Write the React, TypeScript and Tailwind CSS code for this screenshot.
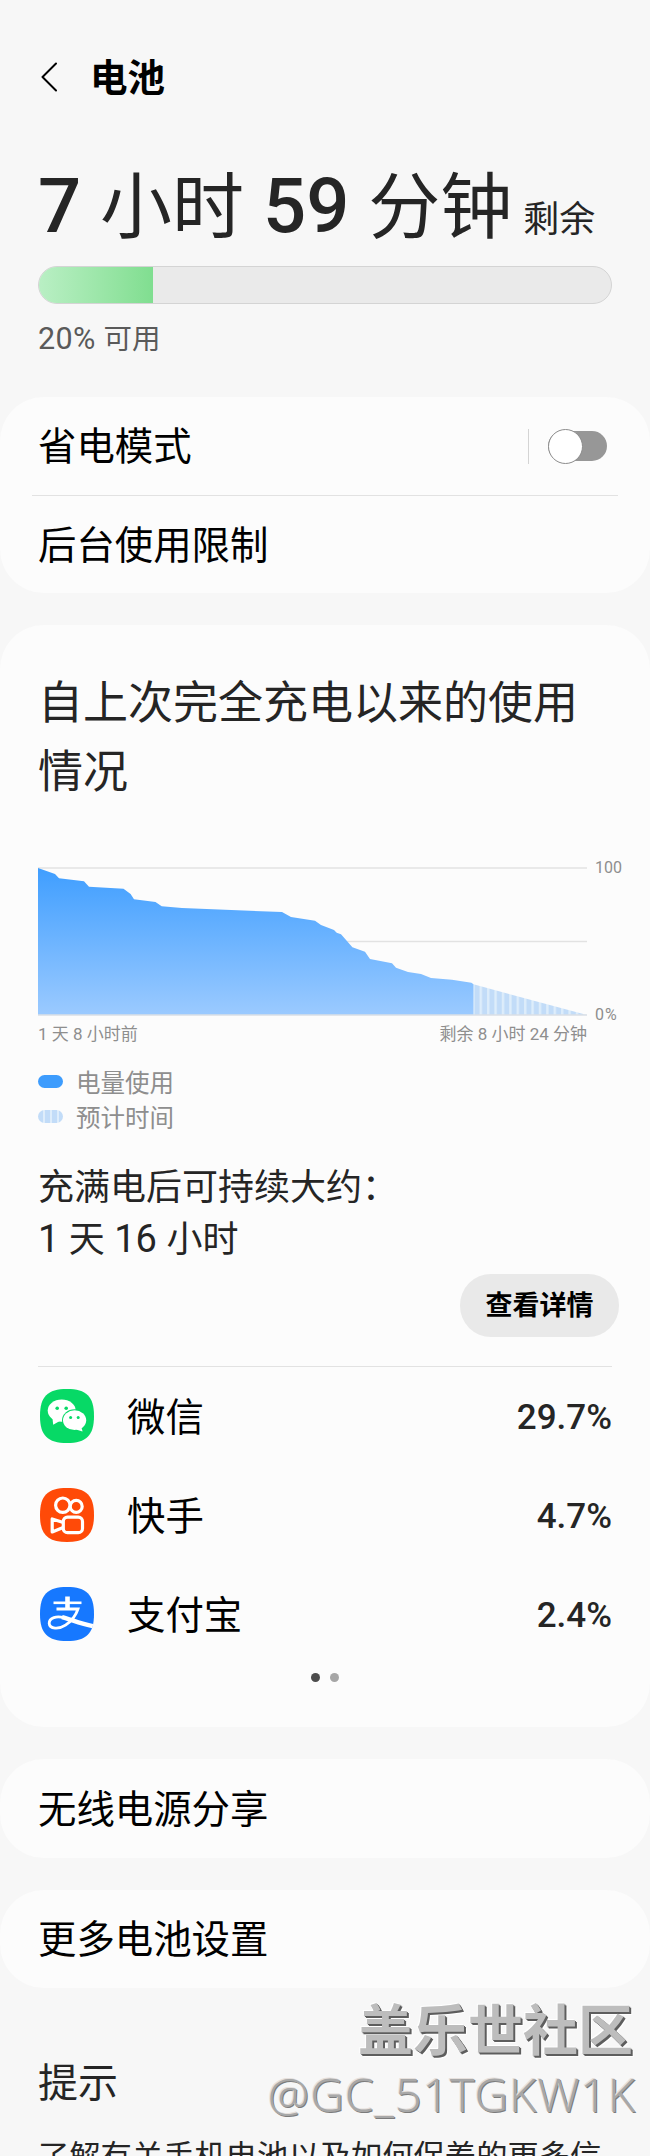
import { ReactNode } from "react";

const apps = [
  { name: "微信", usage: "29.7%", icon: <WechatIcon /> },
  { name: "快手", usage: "4.7%", icon: <KuaishouIcon /> },
  { name: "支付宝", usage: "2.4%", icon: <AlipayIcon /> },
];

const usagePoints =
  "0,0 17,6 21,10.3 46,13.3 51,18.7 85.5,20.7 92.6,26 96,31.3 117.5,34 123.7,38.3 144,40 244,44 253,49 277,52.7 283,57 296,62 298.7,64.7 303,66.3 314.4,79.3 327,83.7 332,91 354,95.3 358,99.7 370,104 383,106 393,110 414,111.7 433.4,114.7 435.5,116.3 435.5,147 0,147";

function AppIcon({ color, children }: { color: string; children: ReactNode }) {
  return (
    <svg viewBox="0 0 54 54" className="mb-0.5 h-[54px] w-[54px]" fill="none">
      <path
        d="M27 0C46.5 0 54 7.5 54 27S46.5 54 27 54 0 46.5 0 27 7.5 0 27 0Z"
        fill={color}
      />
      {children}
    </svg>
  );
}

function WechatIcon() {
  return (
    <AppIcon color="#07d966">
      <path d="M12.2 27l1 8.8 7-4z" fill="#fff" />
      <ellipse cx="21.7" cy="21.6" rx="14" ry="11.2" fill="#fff" />
      <ellipse cx="34.6" cy="31.2" rx="12.6" ry="11" fill="#07d966" />
      <ellipse cx="34.6" cy="31.2" rx="11.6" ry="9.9" fill="#fff" />
      <path d="M36 40.5l6.6 2-1.6-5.5z" fill="#fff" />
      <circle cx="17.2" cy="19.2" r="1.8" fill="#07d966" />
      <circle cx="26.2" cy="19.2" r="1.8" fill="#07d966" />
      <circle cx="30.6" cy="28.4" r="1.5" fill="#07d966" />
      <circle cx="38.2" cy="28.4" r="1.5" fill="#07d966" />
    </AppIcon>
  );
}

function KuaishouIcon() {
  return (
    <AppIcon color="#ff4a08">
      <g stroke="#fff" strokeWidth="3.2" strokeLinejoin="round">
        <circle cx="22.8" cy="17.2" r="7.2" />
        <circle cx="36.2" cy="18.4" r="6" />
        <rect x="23.3" y="29.2" width="19.2" height="15.4" rx="4.2" />
        <path d="M22.5 34.3L12.2 31v13l10.3-4.3" />
      </g>
    </AppIcon>
  );
}

function AlipayIcon() {
  return (
    <AppIcon color="#1678ff">
      <g stroke="#fff">
        <path d="M13.5 15.8H41.5" strokeWidth="2.6" />
        <path d="M27.5 9.5V22" strokeWidth="4.6" />
        <path
          d="M16.5 22H38C36 28 31 34.5 25.5 38.2C19 42.5 9.5 42.2 9.2 36.4C9 30.5 17 28.6 24 30.8"
          strokeWidth="2.8"
        />
        <path d="M22 30.2C31 32.6 40 36.5 52.8 39.2" strokeWidth="4.4" />
      </g>
    </AppIcon>
  );
}

function BatteryChart() {
  return (
    <div className="mt-[51px] flex h-[167px]">
      <svg viewBox="0 0 549 167" className="h-[167px] w-[549px] shrink-0">
        <defs>
          <linearGradient id="usage" x1="0" y1="0" x2="0" y2="1">
            <stop offset="0" stopColor="#3f9eff" />
            <stop offset="1" stopColor="#9bcaff" />
          </linearGradient>
          <pattern id="estimate" width="7.4" height="10" x="436" patternUnits="userSpaceOnUse">
            <rect width="7.4" height="10" fill="#deedfb" />
            <rect x="0.6" width="5" height="10" fill="#c2dcf8" />
          </pattern>
        </defs>
        <g transform="translate(0 10)">
          <path d="M0 0H549M0 73.5H549" stroke="#e2e2e2" strokeWidth="1.3" />
          <path d="M435.5 116.3L549 147H435.5Z" fill="url(#estimate)" />
          <polygon points={usagePoints} fill="url(#usage)" />
          <path d="M0 147H549" stroke="#dadfe6" strokeWidth="1.3" />
        </g>
      </svg>
      <div className="ml-2 flex flex-col justify-between text-[16px] leading-[20px] text-[#8e8e8e]">
        <span>100</span>
        <span className="tracking-[1px]">0%</span>
      </div>
    </div>
  );
}

function Card({ className = "", children }: { className?: string; children: ReactNode }) {
  return (
    <section className={`rounded-[44px] bg-[#fcfcfc] ${className}`}>{children}</section>
  );
}

export default function App() {
  return (
    <div className="relative h-[2156px] w-[650px] overflow-hidden bg-[#f7f7f7] font-[Roboto,'Noto_Sans_CJK_SC',sans-serif] whitespace-nowrap text-[#252525]">
      {/* Title bar */}
      <header className="flex h-[108px] items-center pt-[46px] pl-[41px] text-black">
        <svg viewBox="0 0 16 30" className="h-[30px] w-4" fill="none" stroke="currentColor" strokeWidth="2">
          <path d="M15 1.5L1.5 15L15 28.5" strokeLinecap="round" strokeLinejoin="round" />
        </svg>
        <h1 className="ml-[33px] pt-0.5 text-[37.5px] font-bold">电池</h1>
      </header>

      {/* Remaining time */}
      <div className="mt-[53px] px-[38px]">
        <p className="h-[90px] text-[72px] leading-[90px]">
          <span className="text-[76px] font-medium">7 </span>小时
          <span className="text-[76px] font-medium"> 59 </span>分钟
          <span className="ml-[11px] text-[36px]">剩余</span>
        </p>
        <div className="mt-[15px] h-[38px] overflow-hidden rounded-full border border-[#d4d4d4] bg-[#eaeaea]">
          <div className="h-full w-[20%] bg-linear-to-r from-[#b9efc4] to-[#80de90]" />
        </div>
        <p className="mt-[15px] text-[28.5px] leading-10 text-[#5a5a5a]">
          <span className="text-[30.5px] tracking-[0.3px]">20% </span>可用
        </p>
      </div>

      <Card className="mt-[37px] h-[196px] text-[38.4px] text-black">
        <div className="mx-8 flex h-[99px] items-center justify-between border-b border-[#e2e2e2] pr-[11px] pl-1.5">
          <span className="pt-0.5">省电模式</span>
          <div className="flex items-center">
            <div className="h-[35px] w-px bg-[#d4d4d4]" />
            <div className="ml-[19px] flex h-[30px] w-[59px] items-center rounded-full bg-[#979797]">
              <div className="h-[35px] w-[35px] shrink-0 rounded-full border border-[#8c8c8c] bg-white" />
            </div>
          </div>
        </div>
        <div className="flex h-[97px] items-center px-[38px] pt-[3px]">后台使用限制</div>
      </Card>

      <Card className="mt-8 h-[1102px] px-[38px] pt-11">
        <h2 className="text-[45px] leading-[69px]">
          自上次完全充电以来的使用
          <br />
          情况
        </h2>

        <BatteryChart />
        <div className="mt-[-3px] flex w-[549px] justify-between text-[17px] leading-6 text-[#8e8e8e]">
          <span>1 天 8 小时前</span>
          <span>剩余 8 小时 24 分钟</span>
        </div>

        <div className="mt-5 text-[24.5px] leading-[35px] text-[#8e8e8e]">
          <div className="flex">
            <div className="mt-[9px] h-[13px] w-[25px] rounded-full bg-[#3d9cfd]" />
            <span className="ml-[13px]">电量使用</span>
          </div>
          <div className="flex">
            <div className="mt-[9px] h-[13px] w-[25px] rounded-full bg-[repeating-linear-gradient(90deg,#c2dcf8_0px,#c2dcf8_5px,#deedfb_5px,#deedfb_7px)]" />
            <span className="ml-[13px]">预计时间</span>
          </div>
        </div>

        <p className="mt-[27px] text-[36px] leading-[50.5px]">
          充满电后可持续大约：
          <br />
          <span className="text-[38px]">1 </span>天<span className="text-[38px]"> 16 </span>小时
        </p>
        <button className="mt-[9px] -mr-[7px] ml-auto flex h-[63px] w-[159px] items-center justify-center rounded-[31px] bg-[#e9e9e9] pt-0.5 text-[27px] font-bold text-black">
          查看详情
        </button>

        <div className="mt-[29px] border-t border-[#e2e2e2]">
          {apps.map((app) => (
            <div key={app.name} className="flex h-[99px] items-center pl-[1.5px]">
              {app.icon}
              <span className="ml-[33.5px] pt-0.5 text-[38.4px] text-black">{app.name}</span>
              <span className="ml-auto pt-1 text-[35px] font-medium">{app.usage}</span>
            </div>
          ))}
        </div>
        <div className="mt-[9px] flex justify-center gap-2.5">
          <span className="h-[9px] w-[9px] rounded-full bg-[#4c4c4c]" />
          <span className="h-[9px] w-[9px] rounded-full bg-[#a6a6a6]" />
        </div>
      </Card>

      <Card className="mt-8 flex h-[98.5px] items-center px-[38px] pt-[3px] text-[38.4px] text-black">
        无线电源分享
      </Card>
      <Card className="mt-8 flex h-[98.5px] items-center px-[38px] pt-[3px] text-[38.4px] text-black">
        更多电池设置
      </Card>

      {/* Tips */}
      <div className="mt-[66px] px-[38px] leading-[60px]">
        <h2 className="text-[40px]">提示</h2>
        <p className="mt-[14px] text-[31.3px]">了解有关手机电池以及如何保养的更多信</p>
      </div>

      {/* Community watermark */}
      <div className="absolute right-[14px] bottom-[32px] flex flex-col items-end">
        <span className="mr-[3px] text-[55px] leading-[66px] font-bold text-[#bdbdbd] [text-shadow:1px_1px_0_#5e5e5e,2px_2px_0_#5e5e5e,-1px_-1px_1px_#fff,3px_3px_1px_#fff]">
          盖乐世社区
        </span>
        <span className="font-['Noto_Sans',sans-serif] text-[46.7px] leading-[60px] font-light tracking-[0.8px] text-[#a8a8a8] [text-shadow:-1px_-1px_0_#e6e0dc,1px_1px_0_#7c7c7c]">
          @GC_51TGKW1K
        </span>
      </div>
    </div>
  );
}
